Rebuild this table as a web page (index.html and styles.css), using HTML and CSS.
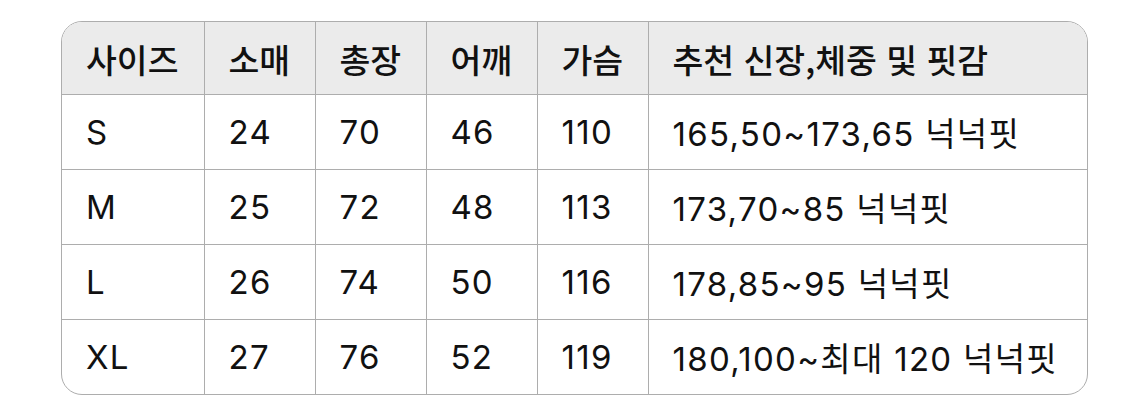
FILE: index.html
```html
<!DOCTYPE html>
<html lang="ko">
<head>
<meta charset="utf-8">
<link rel="stylesheet" href="styles.css">
</head>
<body>
<div class="frame">
  <table class="size-table">
    <colgroup>
      <col class="c1"><col class="c2"><col class="c3"><col class="c4"><col class="c5"><col class="c6">
    </colgroup>
    <thead>
      <tr><th>사이즈</th><th>소매</th><th>총장</th><th>어깨</th><th>가슴</th><th>추천 신장,체중 및 핏감</th></tr>
    </thead>
    <tbody>
      <tr><td>S</td><td>24</td><td>70</td><td>46</td><td>110</td><td>165,50~173,65 넉넉핏</td></tr>
      <tr><td>M</td><td>25</td><td>72</td><td>48</td><td>113</td><td>173,70~85 넉넉핏</td></tr>
      <tr><td>L</td><td>26</td><td>74</td><td>50</td><td>116</td><td>178,85~95 넉넉핏</td></tr>
      <tr><td>XL</td><td>27</td><td>76</td><td>52</td><td>119</td><td>180,100~최대 120 넉넉핏</td></tr>
    </tbody>
  </table>
</div>
</body>
</html>
```
FILE: styles.css
```css
html, body {
  margin: 0;
  padding: 0;
  background: #ffffff;
}
body {
  padding: 21px 0 0 61px;
  font-family: "Inter", "Noto Sans CJK KR", sans-serif;
  color: #111111;
}
.frame {
  width: 1027px;
  border: 1.5px solid #adadad;
  border-radius: 21px;
  overflow: hidden;
  box-sizing: border-box;
}
.size-table {
  width: 100%;
  border-collapse: collapse;
  table-layout: fixed;
}
.c1 { width: 142px; }
.c2 { width: 111px; }
.c3 { width: 111px; }
.c4 { width: 111px; }
.c5 { width: 111px; }
.c6 { width: auto; }
.size-table th,
.size-table td {
  text-align: left;
  padding: 0 0 0 24px;
  border-right: 1.5px solid #adadad;
  border-bottom: 1.5px solid #adadad;
  white-space: nowrap;
}
.size-table th:last-child,
.size-table td:last-child {
  border-right: none;
}
.size-table tbody tr:last-child td {
  border-bottom: none;
}
.size-table th {
  height: 72px;
  background: #ebebeb;
  font-family: "Noto Sans CJK KR", sans-serif;
  font-weight: 500;
  font-size: 33.5px;
}
.size-table td {
  height: 74px;
  font-weight: 400;
  font-size: 33px;
  letter-spacing: 1.3px;
}
```
